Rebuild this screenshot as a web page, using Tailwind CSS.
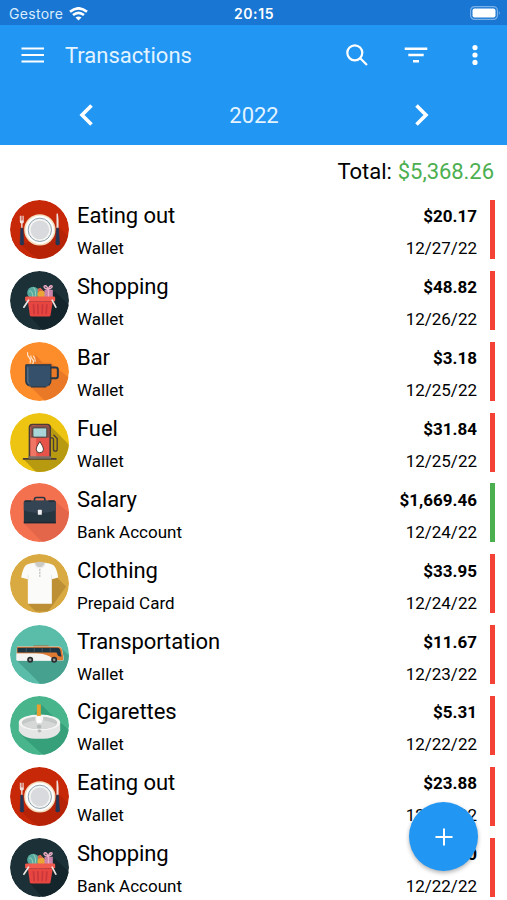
<!DOCTYPE html>
<html lang="en">
<head>
  <meta charset="UTF-8">
  <meta name="viewport" content="width=device-width, initial-scale=1.0">
  <title>Transactions</title>
  <script src="https://cdn.jsdelivr.net/npm/@tailwindcss/browser@4"></script>
</head>
<body class="relative h-[900px] overflow-hidden bg-white font-[Roboto,sans-serif] text-black">

  <!-- Category icons -->
  <svg class="hidden" xmlns="http://www.w3.org/2000/svg">
    <symbol id="eating" viewBox="27.5 22.5 177 177">
      <circle cx="116" cy="111" r="88.5" fill="#c62808"/>
      <path d="M148 78 205 135V200H110L60 156 90 145Z" fill="#a91f08" opacity=".55"/>
      <circle cx="117" cy="112" r="47" fill="#f3dfc0"/>
      <circle cx="117" cy="112" r="42.500" fill="#fff"/>
      <circle cx="117" cy="112" r="35" fill="#f4f4f2" stroke="#7890a0" stroke-width="2.500"/>
      <circle cx="117" cy="112" r="28" fill="#d9dadd"/>
      <path d="M57 70v17q0 6 4 6v14h4V93q4 0 4-6V70h-2v14h-2V70h-3v14h-2V70Z" fill="#eee3df"/>
      <path d="M167 107V66q1-6 4-2 3 14 2 43Z" fill="#eee3df"/>
      <path d="M60 107h6l3 48q-6 5-11 0ZM167 107h6l3 48q-6 5-11 0Z" fill="#243655" stroke="#243655" stroke-width="2"/>
    </symbol>

    <symbol id="shopping" viewBox="27.5 22.5 177 177">
      <circle cx="116" cy="111" r="88.5" fill="#1b3037"/>
      <path d="M162 84 205 125V200H125L86 157Z" fill="#14262b"/>
      <circle cx="97" cy="88" r="18" fill="#56aaa0"/>
      <path d="M85 84q9-8 12 20M98 72q9 10 5 30" fill="none" stroke="#a4d0b5" stroke-width="3"/>
      <path d="M111 104V76l8-3 10 10v21Z" fill="#dc654d"/>
      <circle cx="122" cy="94" r="12" fill="#e9a536"/>
      <path d="M131 79h25v26h-25Z" fill="#c983a8"/>
      <path d="M143 79v26M142 78q-17-5-11-11 7-2 11 11 4-13 11-11 5 5-11 11" fill="none" stroke="#edadc4" stroke-width="4"/>
      <path d="M73 102q0-3 4-3h82q4 0 4 4v10H73Z" fill="#f25a4e"/>
      <path d="M81 113h75l-7 42q-1 4-5 4H92q-4 0-5-4Z" fill="#e64540"/>
      <path d="M98 124l2 26M111 124l1 26M125 124l-1 26M138 124l-2 26" stroke="#c9373a" stroke-width="5" stroke-linecap="round"/>
      <path d="M69 131 83 110M154 110l11 21" stroke="#eee6e2" stroke-width="5" stroke-linecap="round"/>
    </symbol>

    <symbol id="bar" viewBox="27.5 22.5 177 177">
      <circle cx="116" cy="111" r="88.5" fill="#fd8d2b"/>
      <path d="M103 60 126 85H150L205 130V200H133L88 155Z" fill="#e97927"/>
      <path d="M148 99h17q6 0 6 6v20q0 6-6 6h-18" fill="none" stroke="#253746" stroke-width="6"/>
      <path d="M75 91h75v48q0 18-18 18H93q-18 0-18-18Z" fill="#34506b"/>
      <path d="M74 91h78M75 93v46q0 10 8 14M150 94v45q0 8-6 13M90 157h46" fill="none" stroke="#253746" stroke-width="4"/>
      <path d="M81 98v42q0 6 5 9" fill="none" stroke="#6a8397" stroke-width="2.500"/>
      <path d="M80 54q-1 10 5 15t3 16M90 64q-1 6 5 11t1 12M98 65q6 7 5 15" fill="none" stroke="#ffe3cb" stroke-width="3.500" stroke-linecap="round"/>
    </symbol>

    <symbol id="fuel" viewBox="27.5 22.5 177 177">
      <circle cx="116" cy="111" r="88.5" fill="#edc411"/>
      <path d="M148 60 205 118V200H106L67 160H90Z" fill="#b89a10"/>
      <path d="M66 160h101" stroke="#493b35" stroke-width="5"/>
      <path d="M86 158V66q0-9 9-9h44q9 0 9 9v92Z" fill="#e75349" stroke="#493b35" stroke-width="5"/>
      <path d="M89 158V68q0-8 8-8h9v98Z" fill="#ef7665"/>
      <path d="M89 97V67q0-7 7-7h42q7 0 7 7v30Z" fill="#88514a"/>
      <rect x="96" y="67" width="42" height="28" rx="4" fill="#a9d4d8" stroke="#493b35" stroke-width="3"/>
      <path d="M83 152h68v8H83Z" fill="#77706b"/>
      <path d="M117 108q11 16 11 23a11 11 0 0 1-22 0q0-7 11-23Z" fill="#fff" stroke="#493b35" stroke-width="3"/>
      <path d="M148 97h5q5 0 5 6v28q0 6 5 6 6 0 6-6V99l-11-11" fill="none" stroke="#493b35" stroke-width="4"/>
    </symbol>

    <symbol id="salary" viewBox="27.5 22.5 177 177">
      <circle cx="116" cy="111" r="88.5" fill="#f47150"/>
      <path d="M164 78 205 112V160L174 200H124L69 143Z" fill="#e3664b"/>
      <path d="M101 77v-6q0-5 5-5h21q5 0 5 5v6" fill="none" stroke="#283541" stroke-width="5"/>
      <path d="M72 76h88q5 0 5 6v61H69V82q0-6 3-6Z" fill="#263641"/>
      <path d="M69 78q3-3 7-3h82q5 0 7 4v25q-20 8-48 8t-48-8Z" fill="#354453"/>
      <path d="M72 77h19M143 77h19" stroke="#1d2a34" stroke-width="4"/>
      <path d="M69 141h96" stroke="#1c2932" stroke-width="4"/>
      <rect x="111" y="103" width="12" height="15" rx="2" fill="#eee"/>
    </symbol>

    <symbol id="clothing" viewBox="27.5 22.5 177 177">
      <circle cx="116" cy="111" r="88.5" fill="#d9aa42"/>
      <path d="M154 52 172 97 196 120 142 195H105L80 172Z" fill="#bd9036"/>
      <path d="M101 49q-15 2-24 6-11 8-16 38l20 5v74h72V98l19-5q-4-30-16-38-9-4-23-6-16 9-32 0Z" fill="#fbfbfa"/>
      <path d="M101 49q16-6 32 0-3 14-16 14t-16-14Z" fill="#cbcac5"/>
      <path d="M101 49q2 15 16 15t16-15" fill="none" stroke="#eee" stroke-width="4"/>
      <path d="M117 64v28M82 85v16M152 85v16" stroke="#dedede" stroke-width="2"/>
      <path d="M117 70v1M117 79v1M117 88v1" stroke="#999" stroke-width="3" stroke-linecap="round"/>
    </symbol>

    <symbol id="transport" viewBox="27.5 22.5 177 177">
      <circle cx="116" cy="111" r="88.5" fill="#5abdaa"/>
      <path d="M183 93 205 115V200H120L48 129Z" fill="#46a18f"/>
      <path d="M96 88l3-4h43l4 4Z" fill="#ad6634"/>
      <path d="M48 91q0-4 4-4h120q9 0 12 9l4 21v12H50q-3 0-3-3Z" fill="#f5f4f2"/>
      <path d="M48 88h123q10 0 13 10l3 19v11h-30q-5-13-34-19H48Z" fill="#df7a32"/>
      <path d="M47 108h58q33 1 49 22H50q-3 0-3-3Z" fill="#f5f4f2"/>
      <path d="M50 91h120q6 0 8 6l4 20q-11 2-13-8l-2-4H50Z" fill="#1d3443"/>
      <path d="M76 91v14M100 91v14M124 91v14M148 91v14" stroke="#56636c" stroke-width="2"/>
      <circle cx="88" cy="127" r="9" fill="#292d30"/><circle cx="88" cy="127" r="4" fill="#999"/>
      <circle cx="160" cy="127" r="9" fill="#292d30"/><circle cx="160" cy="127" r="4" fill="#999"/>
    </symbol>

    <symbol id="cigarettes" viewBox="27.5 22.5 177 177">
      <circle cx="116" cy="111" r="88.5" fill="#48b58d"/>
      <path d="M122 48 145 72 205 125V200H127L58 137Z" fill="#36a07a"/>
      <path d="M54 101v24q8 26 62 26t62-26v-24Z" fill="#e4e6e5"/>
      <ellipse cx="116" cy="102" rx="62" ry="24" fill="#f5f5f4"/>
      <ellipse cx="116" cy="103" rx="53" ry="19" fill="#c3c7c6"/>
      <path d="M65 108q22-13 51-13t51 13q-15 14-51 14t-51-14Z" fill="#d6d8d7"/>
      <path d="M104 82h23v12l-5 10h-13l-5-10Z" fill="#f5f5f4"/>
      <path d="M108 48h12v35h-12Z" fill="#e8a02e"/><path d="M108 83h12v20h-12Z" fill="#fff"/>
      <path d="M107 113l7-5 8 4-2 7-9 1ZM109 126l8-3 6 5-8 5Z" fill="#b4b8b8"/>
    </symbol>
  </svg>

  <!-- Status bar -->
  <div class="grid h-[25px] grid-cols-3 items-center bg-[#1976d2] pt-0.5 pr-[8px] pl-[9px] font-[Inter,sans-serif] text-[#d9ecff]">
    <div class="flex items-center gap-[6px] text-[14px] tracking-[0.3px]">
      Gestore
      <svg class="h-[14px] w-[19px]" viewBox="0 0 19 14" fill="none" stroke="#fff" stroke-width="2.600">
        <path d="M1 4.800Q9.500-2.200 18 4.800M4 8.100q5.500-4.400 11 0"/>
        <path d="M6.500 10.600q3-2.300 6 0l-3 3Z" fill="#fff" stroke="none"/>
      </svg>
    </div>
    <div class="text-center text-[14px] font-semibold tracking-[0.6px] text-white">20:15</div>
    <svg class="-mr-[2px] -mt-[1px] h-[14px] w-[31px] justify-self-end" viewBox="0 0 31 14">
      <rect x=".6" y=".6" width="26.800" height="12.800" rx="4" fill="none" stroke="#79b0e7" stroke-width="1.200"/>
      <rect x="2.500" y="2.500" width="23" height="9" rx="2" fill="#fff"/>
      <path d="M28.800 5q2 2 0 4Z" fill="#79b0e7"/>
    </svg>
  </div>

  <!-- App bar -->
  <header class="h-[120px] bg-[#2196f3] text-white">
    <div class="flex h-[60px] items-center pr-[29px] pl-[21px]">
      <svg class="h-4 w-6" viewBox="0 0 24 16" stroke="currentColor" stroke-width="2.200"><path d="M.5 1.500h22.500M.5 8h22.500M.5 14.500h22.500"/></svg>
      <h1 class="ml-5 flex-1 text-[22px] text-[#e3f3ff]">Transactions</h1>
      <svg class="h-[22px] w-[22px]" viewBox="0 0 22 22" fill="none" stroke="currentColor" stroke-width="2.200"><circle cx="8.800" cy="8.800" r="7.500"/><path d="M14 14l7 7"/></svg>
      <svg class="ml-[36px] h-4 w-6" viewBox="0 0 24 16" stroke="currentColor" stroke-width="2.600"><path d="M.7 1.700h22.600M4.300 8h15.400M9 14.300h6"/></svg>
      <svg class="ml-[44px] h-5 w-[6px]" viewBox="0 0 6 20" fill="currentColor"><circle cx="3" cy="2.600" r="2.600"/><circle cx="3" cy="10" r="2.600"/><circle cx="3" cy="17.400" r="2.600"/></svg>
    </div>
    <div class="flex h-[60px] items-center justify-between pr-[77px] pl-[78px]">
      <svg class="h-[22px] w-4" viewBox="0 0 16 22" fill="none" stroke="currentColor" stroke-width="3.600"><path d="M13.500 1.500 4 11l9.500 9.500"/></svg>
      <div class="text-[22px] text-[#e3f3ff]">2022</div>
      <svg class="h-[22px] w-4" viewBox="0 0 16 22" fill="none" stroke="currentColor" stroke-width="3.600"><path d="M2.500 1.500 12 11l-9.500 9.500"/></svg>
    </div>
  </header>

  <main>
    <div class="flex h-[49px] items-center justify-end gap-[6px] pt-[4px] pr-[13px] text-[22px] tracking-[-0.05px]">
      <span>Total:</span><span class="text-[#4caf50]">$5,368.26</span>
    </div>
    <div id="list"></div>
  </main>

  <!-- Add button -->
  <button class="absolute top-[802px] left-[409px] flex h-[69px] w-[69px] items-center justify-center rounded-full bg-[#2196f3] shadow-[0_2px_4px_rgba(0,0,0,0.3)]">
    <svg class="h-[18px] w-[18px]" viewBox="0 0 18 18" stroke="#fff" stroke-width="2"><path d="M9 .5v17M.5 9h17"/></svg>
  </button>

  <script>
    const transactions = [
      ['eating', 'Eating out', 'Wallet', '$20.17', '12/27/22'],
      ['shopping', 'Shopping', 'Wallet', '$48.82', '12/26/22'],
      ['bar', 'Bar', 'Wallet', '$3.18', '12/25/22'],
      ['fuel', 'Fuel', 'Wallet', '$31.84', '12/25/22'],
      ['salary', 'Salary', 'Bank Account', '$1,669.46', '12/24/22'],
      ['clothing', 'Clothing', 'Prepaid Card', '$33.95', '12/24/22'],
      ['transport', 'Transportation', 'Wallet', '$11.67', '12/23/22'],
      ['cigarettes', 'Cigarettes', 'Wallet', '$5.31', '12/22/22'],
      ['eating', 'Eating out', 'Wallet', '$23.88', '12/22/22'],
      ['shopping', 'Shopping', 'Bank Account', '$52.30', '12/22/22'],
    ];

    document.getElementById('list').innerHTML = transactions.map(([icon, name, account, amount, date]) => `
      <div class="flex h-[70.86px] items-center pr-[12.500px] pl-[9.500px]">
        <svg class="h-[59px] w-[59px] rounded-full"><use href="#${icon}"/></svg>
        <div class="ml-[8.500px] flex-1 pt-[6px]">
          <div class="text-[22px] leading-8 tracking-[-0.08px]">${name}</div>
          <div class="text-[17px] leading-8">${account}</div>
        </div>
        <div class="mr-[12.500px] pt-[6px] text-right text-[17px] leading-8">
          <div class="font-bold">${amount}</div>
          <div>${date}</div>
        </div>
        <div class="h-[59px] w-[5px] ${icon === 'salary' ? 'bg-[#4caf50]' : 'bg-[#f44336]'}"></div>
      </div>`).join('');
  </script>
</body>
</html>
